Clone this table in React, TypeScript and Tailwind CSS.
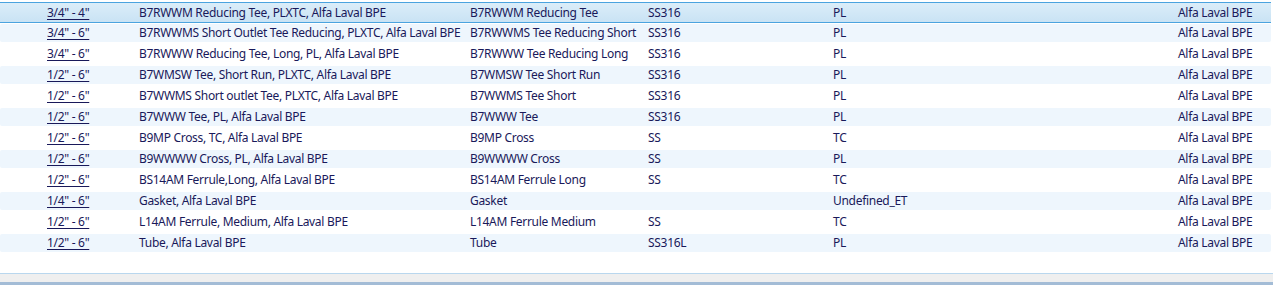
import React from 'react';

interface Part {
  size: string;
  description: string;
  name: string;
  material: string;
  end: string;
  vendor: string;
}

const parts: Part[] = [
  { size: '3/4" - 4"', description: 'B7RWWM Reducing Tee, PLXTC, Alfa Laval BPE', name: 'B7RWWM Reducing Tee', material: 'SS316', end: 'PL', vendor: 'Alfa Laval BPE' },
  { size: '3/4" - 6"', description: 'B7RWWMS Short Outlet Tee Reducing, PLXTC, Alfa Laval BPE', name: 'B7RWWMS Tee Reducing Short', material: 'SS316', end: 'PL', vendor: 'Alfa Laval BPE' },
  { size: '3/4" - 6"', description: 'B7RWWW Reducing Tee, Long, PL, Alfa Laval BPE', name: 'B7RWWW Tee Reducing Long', material: 'SS316', end: 'PL', vendor: 'Alfa Laval BPE' },
  { size: '1/2" - 6"', description: 'B7WMSW Tee, Short Run, PLXTC, Alfa Laval BPE', name: 'B7WMSW Tee Short Run', material: 'SS316', end: 'PL', vendor: 'Alfa Laval BPE' },
  { size: '1/2" - 6"', description: 'B7WWMS Short outlet Tee, PLXTC, Alfa Laval BPE', name: 'B7WWMS Tee Short', material: 'SS316', end: 'PL', vendor: 'Alfa Laval BPE' },
  { size: '1/2" - 6"', description: 'B7WWW Tee, PL, Alfa Laval BPE', name: 'B7WWW Tee', material: 'SS316', end: 'PL', vendor: 'Alfa Laval BPE' },
  { size: '1/2" - 6"', description: 'B9MP Cross, TC, Alfa Laval BPE', name: 'B9MP Cross', material: 'SS', end: 'TC', vendor: 'Alfa Laval BPE' },
  { size: '1/2" - 6"', description: 'B9WWWW Cross, PL, Alfa Laval BPE', name: 'B9WWWW Cross', material: 'SS', end: 'PL', vendor: 'Alfa Laval BPE' },
  { size: '1/2" - 6"', description: 'BS14AM Ferrule,Long, Alfa Laval BPE', name: 'BS14AM Ferrule Long', material: 'SS', end: 'TC', vendor: 'Alfa Laval BPE' },
  { size: '1/4" - 6"', description: 'Gasket, Alfa Laval BPE', name: 'Gasket', material: '', end: 'Undefined_ET', vendor: 'Alfa Laval BPE' },
  { size: '1/2" - 6"', description: 'L14AM Ferrule, Medium, Alfa Laval BPE', name: 'L14AM Ferrule Medium', material: 'SS', end: 'TC', vendor: 'Alfa Laval BPE' },
  { size: '1/2" - 6"', description: 'Tube, Alfa Laval BPE', name: 'Tube', material: 'SS316L', end: 'PL', vendor: 'Alfa Laval BPE' },
];

function Cells({ p }: { p: Part }) {
  return (
    <>
      <div className="w-[139px] shrink-0 pl-[47px]">
        <span className="underline underline-offset-2">{p.size}</span>
      </div>
      <div className="w-[331px] shrink-0 whitespace-nowrap">{p.description}</div>
      <div className="w-[178px] shrink-0 whitespace-nowrap">{p.name}</div>
      <div className="w-[185px] shrink-0">{p.material}</div>
      <div className="w-[345px] shrink-0">{p.end}</div>
      <div className="whitespace-nowrap">{p.vendor}</div>
    </>
  );
}

export default function App() {
  return (
    <div
      className="flex h-[286px] w-[1273px] flex-col bg-white text-[12px] tracking-[-0.3px] text-[#19195a]"
      style={{ fontFamily: '"Segoe UI", "Noto Sans", sans-serif' }}
    >
      <div className="pt-[2px] pr-[2px]">
        {parts.map((p, i) =>
          i === 0 ? (
            <div
              key={i}
              className="flex h-[21px] items-center border-y border-[#4aa3df] bg-gradient-to-b from-[#dbedf9] to-[#c9e3f4] leading-none"
            >
              <Cells p={p} />
            </div>
          ) : (
            <div key={i} className="h-[21px] pt-px">
              <div
                className={`flex h-[18px] items-center rounded-[2px] leading-none ${
                  i % 2 === 1 ? 'bg-[#eef6fd]' : 'bg-white'
                }`}
              >
                <Cells p={p} />
              </div>
            </div>
          )
        )}
      </div>
      <div className="flex-1" />
      <div className="h-px bg-[#b9d7ee]" />
      <div className="h-[8px] bg-[#efefef]" />
      <div className="h-[3px] bg-[#a3bcd6]" />
      <div className="h-[1px] bg-white" />
    </div>
  );
}
